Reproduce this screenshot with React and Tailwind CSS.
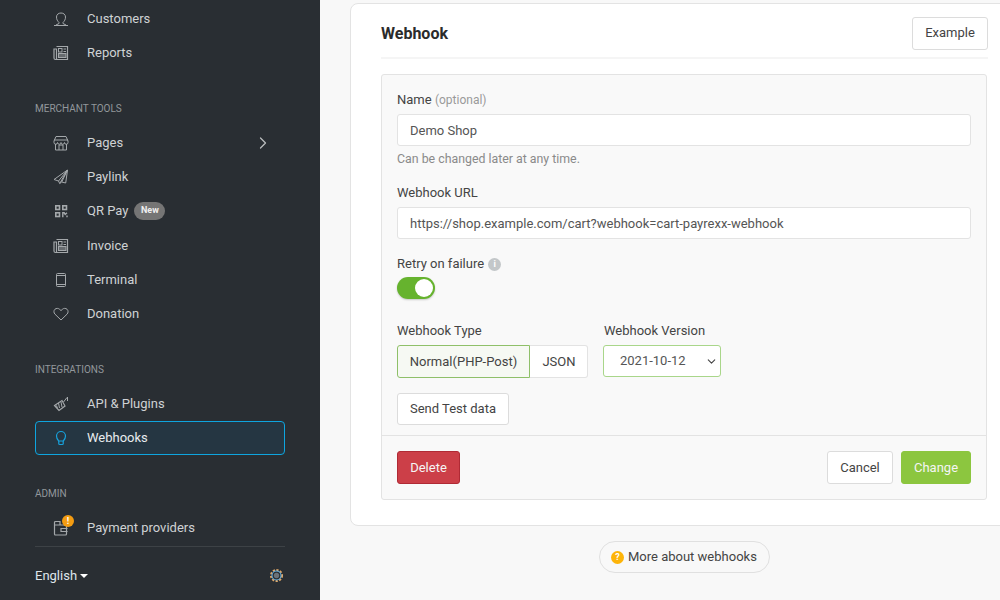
import React from "react";
import { ChevronRight, ChevronDown } from "lucide-react";

const Svg = ({ children, className = "text-[#a4a8ab]" }) => (
  <svg width="16" height="16" viewBox="0 0 16 16" fill="none" stroke="currentColor" strokeWidth="1" className={className}>
    {children}
  </svg>
);

const UserIcon = () => (
  <Svg>
    <path d="M6 11.5C4.500 10 3.500 8.500 3.500 6 3.500 3.500 5.500 2 8 2s4.500 1.500 4.500 4c0 2.500-1 4-2.500 5.500v1l3 1.500" />
    <path d="M6 11.5v1l-3 1.500M1 14.500h14" />
  </Svg>
);

const NewsIcon = () => (
  <Svg>
    <path d="M3.500 1.500h11v13H2.500A1.500 1.500 0 0 1 1 13V4h2.500v10" strokeWidth="1.200" />
    <rect x="5.500" y="3.500" width="3.500" height="3.500" />
    <path d="M10.500 4H13M10.500 6.500H13" />
    <rect x="5.500" y="8.500" width="7.500" height="4" fill="currentColor" fillOpacity="0.5" />
  </Svg>
);

const ShopIcon = () => (
  <Svg>
    <path d="M3 1.500h10l2 4.500v1.500a1.700 1.700 0 0 1-3.500 0 1.700 1.700 0 0 1-3.500 0 1.700 1.700 0 0 1-3.500 0 1.700 1.700 0 0 1-3.500 0V6z" />
    <path d="M1 5h14M2.500 9v6h11V9M6 15V10h4v5" />
  </Svg>
);

const PlaneIcon = () => (
  <Svg>
    <path d="M14.500 1 1 10.500l4.500 1.500 1.200 2.500 2-1.500 4 1z" />
    <path d="M14.500 1 5.500 12M14.500 1 6.700 14.500M14.500 1 8.700 13" />
  </Svg>
);

const QrIcon = () => (
  <Svg>
    <rect x="2.800" y="2.800" width="3.700" height="3.700" strokeWidth="1.600" />
    <rect x="9.800" y="2.800" width="3.700" height="3.700" strokeWidth="1.600" />
    <rect x="2.800" y="9.800" width="3.700" height="3.700" strokeWidth="1.600" />
    <path d="M9.800 14.200V9.800h1.400l1 1.600 1.800-1.600M14 12.400v1.800" strokeWidth="1.400" />
  </Svg>
);

const TabletIcon = () => (
  <Svg>
    <rect x="3.500" y="1.500" width="9" height="13" rx="1" />
    <path d="M3.500 3.500h9M3.500 12.500h9" />
  </Svg>
);

const HeartIcon = () => (
  <Svg>
    <path d="M8 14 2 8.200C.6 6.800.6 4.600 1.900 3.300c1.400-1.300 3.500-1.200 4.800.1L8 4.600l1.300-1.200c1.300-1.300 3.400-1.400 4.800-.1 1.300 1.300 1.300 3.500-.1 4.900z" />
  </Svg>
);

const PluginIcon = () => (
  <Svg>
    <path d="M1.500 9.500 9 4.500l3 5.500-6 4.500z" strokeWidth="1.200" />
    <path d="M5.500 7 6.500 12M8 6l1 5M3.500 9.500l1 3" />
    <path d="M10.500 6 14 1.500M14.500 1v4" />
  </Svg>
);

const BulbIcon = () => (
  <Svg className="text-[#17a2dc]">
    <path d="M5.700 11C4.300 9.500 3.500 8.200 3.500 6a4.500 4.500 0 0 1 9 0c0 2.200-.8 3.500-2.200 5z" strokeWidth="1.200" />
    <path d="M5.800 11v2.700c0 .5.500.8 1 .8h2.400c.5 0 1-.3 1-.8V11" strokeWidth="1.200" />
  </Svg>
);

const WalletIcon = () => (
  <div className="relative h-4 w-4">
    <Svg>
      <path d="M1.500 5V2.500a1 1 0 0 1 1-1H7v3.500M1.500 5h12v9a1 1 0 0 1-1 1h-10a1 1 0 0 1-1-1z" strokeWidth="1.200" />
      <path d="M14.500 8.500H8v3h6.500" strokeWidth="1.200" />
    </Svg>
    <span className="absolute left-[9px] top-[-5px] flex h-3 w-3 items-center justify-center rounded-full bg-[#f39c12] text-[9px] font-bold leading-none text-white">
      !
    </span>
  </div>
);

const NavItem = ({ icon, label, active, chevron, badge, className = "" }) => (
  <div
    className={`flex h-[34px] items-center pl-[18px] pr-[12px] text-[13px] ${className} ${
      active ? "rounded-[4px] border border-[#0ea5df] bg-[#253642] text-[#e8ecef]" : "text-[#cfd2d4]"
    }`}
  >
    <span className={`flex w-[34px] shrink-0 ${active ? "ml-[-1px]" : ""}`}>{icon}</span>
    <span>{label}</span>
    {badge && (
      <span className="ml-[6px] flex h-[18px] items-center rounded-full bg-[#757575] px-[6.500px] text-[9px] font-bold text-[#f0f0f0]">
        {badge}
      </span>
    )}
    {chevron && <ChevronRight size={20} strokeWidth={1.5} className="ml-auto text-[#b9bcbe]" />}
  </div>
);

const SectionTitle = ({ children, className }) => (
  <div className={`flex h-[16px] items-center text-[10px] uppercase text-[#92979b] ${className}`}>{children}</div>
);

const Button = ({ children, className = "" }) => (
  <button className={`flex items-center justify-center rounded-[3px] border text-[13px] ${className}`}>{children}</button>
);

export default function App() {
  return (
    <div className="flex h-[600px] w-[1000px] overflow-hidden bg-[#f8f8f8] font-['Roboto',sans-serif] text-[13px] text-[#444]">
      {/* Sidebar */}
      <aside className="flex h-full w-[320px] shrink-0 flex-col bg-[#292e33] px-[35px] pt-[2px]">
        <NavItem icon={<UserIcon />} label="Customers" />
        <NavItem icon={<NewsIcon />} label="Reports" />

        <SectionTitle className="mt-[30px] mb-[10px]">Merchant Tools</SectionTitle>
        <NavItem icon={<ShopIcon />} label="Pages" chevron />
        <NavItem icon={<PlaneIcon />} label="Paylink" />
        <NavItem icon={<QrIcon />} label="QR Pay" badge="New" />
        <NavItem icon={<NewsIcon />} label="Invoice" className="mt-[1px]" />
        <NavItem icon={<TabletIcon />} label="Terminal" />
        <NavItem icon={<HeartIcon />} label="Donation" />

        <SectionTitle className="mt-[30px] mb-[10px]">Integrations</SectionTitle>
        <NavItem icon={<PluginIcon />} label="API & Plugins" />
        <NavItem icon={<BulbIcon />} label="Webhooks" active />

        <SectionTitle className="mt-[30px] mb-[10px]">Admin</SectionTitle>
        <NavItem icon={<WalletIcon />} label="Payment providers" />

        <div className="mt-[1px] border-t border-[#3d4246]" />
        <div className="mt-[19px] flex items-center justify-between text-[13px] text-[#dfe6ec]">
          <div className="flex items-center gap-[3px]">
            English
            <span className="mt-[1px] h-0 w-0 border-x-[4px] border-t-[4px] border-x-transparent border-t-white" />
          </div>
          <svg width="15" height="15" viewBox="0 0 14 14" fill="none" className="mr-[1px]">
            <circle cx="7" cy="7" r="5.200" stroke="#e0a868" strokeWidth="1.800" strokeDasharray="2 1.400" />
            <circle cx="7" cy="7" r="4.200" stroke="#62b0e4" strokeWidth="1" />
            <circle cx="7" cy="7" r="2.500" fill="#6b7278" />
          </svg>
        </div>
      </aside>

      {/* Main */}
      <main className="flex min-w-0 flex-1 flex-col pl-[30px] pt-[3px]">
        <div className="h-[523px] w-[668px] shrink-0 rounded-[8px] border border-[#e3e3e3] bg-white pl-[30px]">
          <div className="flex h-[55px] w-[607px] items-center justify-between border-b-2 border-[#f5f5f5] pt-[7px]">
            <h2 className="text-[16px] font-bold text-[#2b2b2b]">Webhook</h2>
            <Button className="mt-[-2px] h-[33px] w-[76px] border-[#dcdcdc] bg-white text-[#444]">Example</Button>
          </div>

          <div className="mt-[15px] h-[426px] w-[606px] rounded-[3px] border border-[#e3e3e3] bg-[#f9f9f9]">
            <div className="h-[361px] border-b border-[#e3e3e3] px-[15px] pt-[17px]">
              <div className="h-[16px] leading-[16px]">
                Name <span className="text-[12px] text-[#9a9a9a]">(optional)</span>
              </div>
              <input
                readOnly
                value="Demo Shop"
                className="mt-[6px] block h-[32px] w-[574px] rounded-[3px] border border-[#e3e3e3] bg-white px-[12px] text-[13px] text-[#555] outline-none"
              />
              <p className="mt-[5px] h-[16px] text-[12.35px] leading-[16px] text-[#8a8a8a]">Can be changed later at any time.</p>

              <div className="mt-[18px] h-[16px] leading-[16px]">Webhook URL</div>
              <input
                readOnly
                value="https://shop.example.com/cart?webhook=cart-payrexx-webhook"
                className="mt-[6px] block h-[32px] w-[574px] rounded-[3px] border border-[#e3e3e3] bg-white px-[12px] text-[13px] text-[#555] outline-none"
              />

              <div className="mt-[17px] flex h-[16px] items-center gap-[4px] leading-[16px]">
                Retry on failure
                <span className="flex h-[13px] w-[13px] items-center justify-center rounded-full bg-[#c3c7c9] text-[9px] font-bold leading-none text-white">
                  i
                </span>
              </div>
              <div className="mt-[5px] flex h-[22px] w-[38px] items-center justify-end rounded-full bg-[#66b32e] pr-[2px] shadow-[0_1px_2px_rgba(0,0,0,0.2)]">
                <span className="h-[18px] w-[18px] rounded-full bg-white" />
              </div>

              <div className="mt-[24px] flex items-start">
                <div>
                  <div className="h-[16px] leading-[16px]">Webhook Type</div>
                  <div className="mt-[6px] flex h-[33px]">
                    <div className="flex w-[133px] items-center justify-center rounded-l-[3px] border border-[#8fc069] bg-[#f6f9f3]">Normal(PHP-Post)</div>
                    <div className="flex w-[58px] items-center justify-center rounded-r-[3px] border border-l-0 border-[#e3e3e3] bg-white pl-[1px]">JSON</div>
                  </div>
                </div>
                <div className="ml-[15px]">
                  <div className="h-[16px] pl-[1px] leading-[16px]">Webhook Version</div>
                  <div className="mt-[6px] flex h-[32px] w-[118px] items-center rounded-[3px] border border-[#a9d68a] bg-white pl-[16px] pr-[2px] text-[#555]">
                    2021-10-12
                    <ChevronDown size={13} strokeWidth={2} className="ml-auto text-[#444]" />
                  </div>
                </div>
              </div>

              <Button className="mt-[15px] h-[32px] w-[112px] border-[#dcdcdc] bg-white text-[#444]">Send Test data</Button>
            </div>

            <div className="flex items-start justify-between px-[15px] pt-[15px]">
              <Button className="h-[33px] w-[63px] border-[#b02a35] bg-[#cc3f48] text-[#f5f5f5]">Delete</Button>
              <div className="flex gap-[8px]">
                <Button className="h-[33px] w-[66px] border-[#dcdcdc] bg-white text-[#444]">Cancel</Button>
                <Button className="h-[33px] w-[70px] border-[#8cc63f] bg-[#8cc63f] text-[#f5f5f5]">Change</Button>
              </div>
            </div>
          </div>
        </div>

        <div className="ml-[249px] mt-[15px] flex h-[32px] w-[171px] items-center rounded-full border border-[#e0e0e0] pl-[11px] text-[#444]">
          <span className="mr-[4px] flex h-[13px] w-[13px] items-center justify-center rounded-full bg-[#fdb408] text-[9px] font-bold leading-none text-white">
            ?
          </span>
          More about webhooks
        </div>
      </main>
    </div>
  );
}
